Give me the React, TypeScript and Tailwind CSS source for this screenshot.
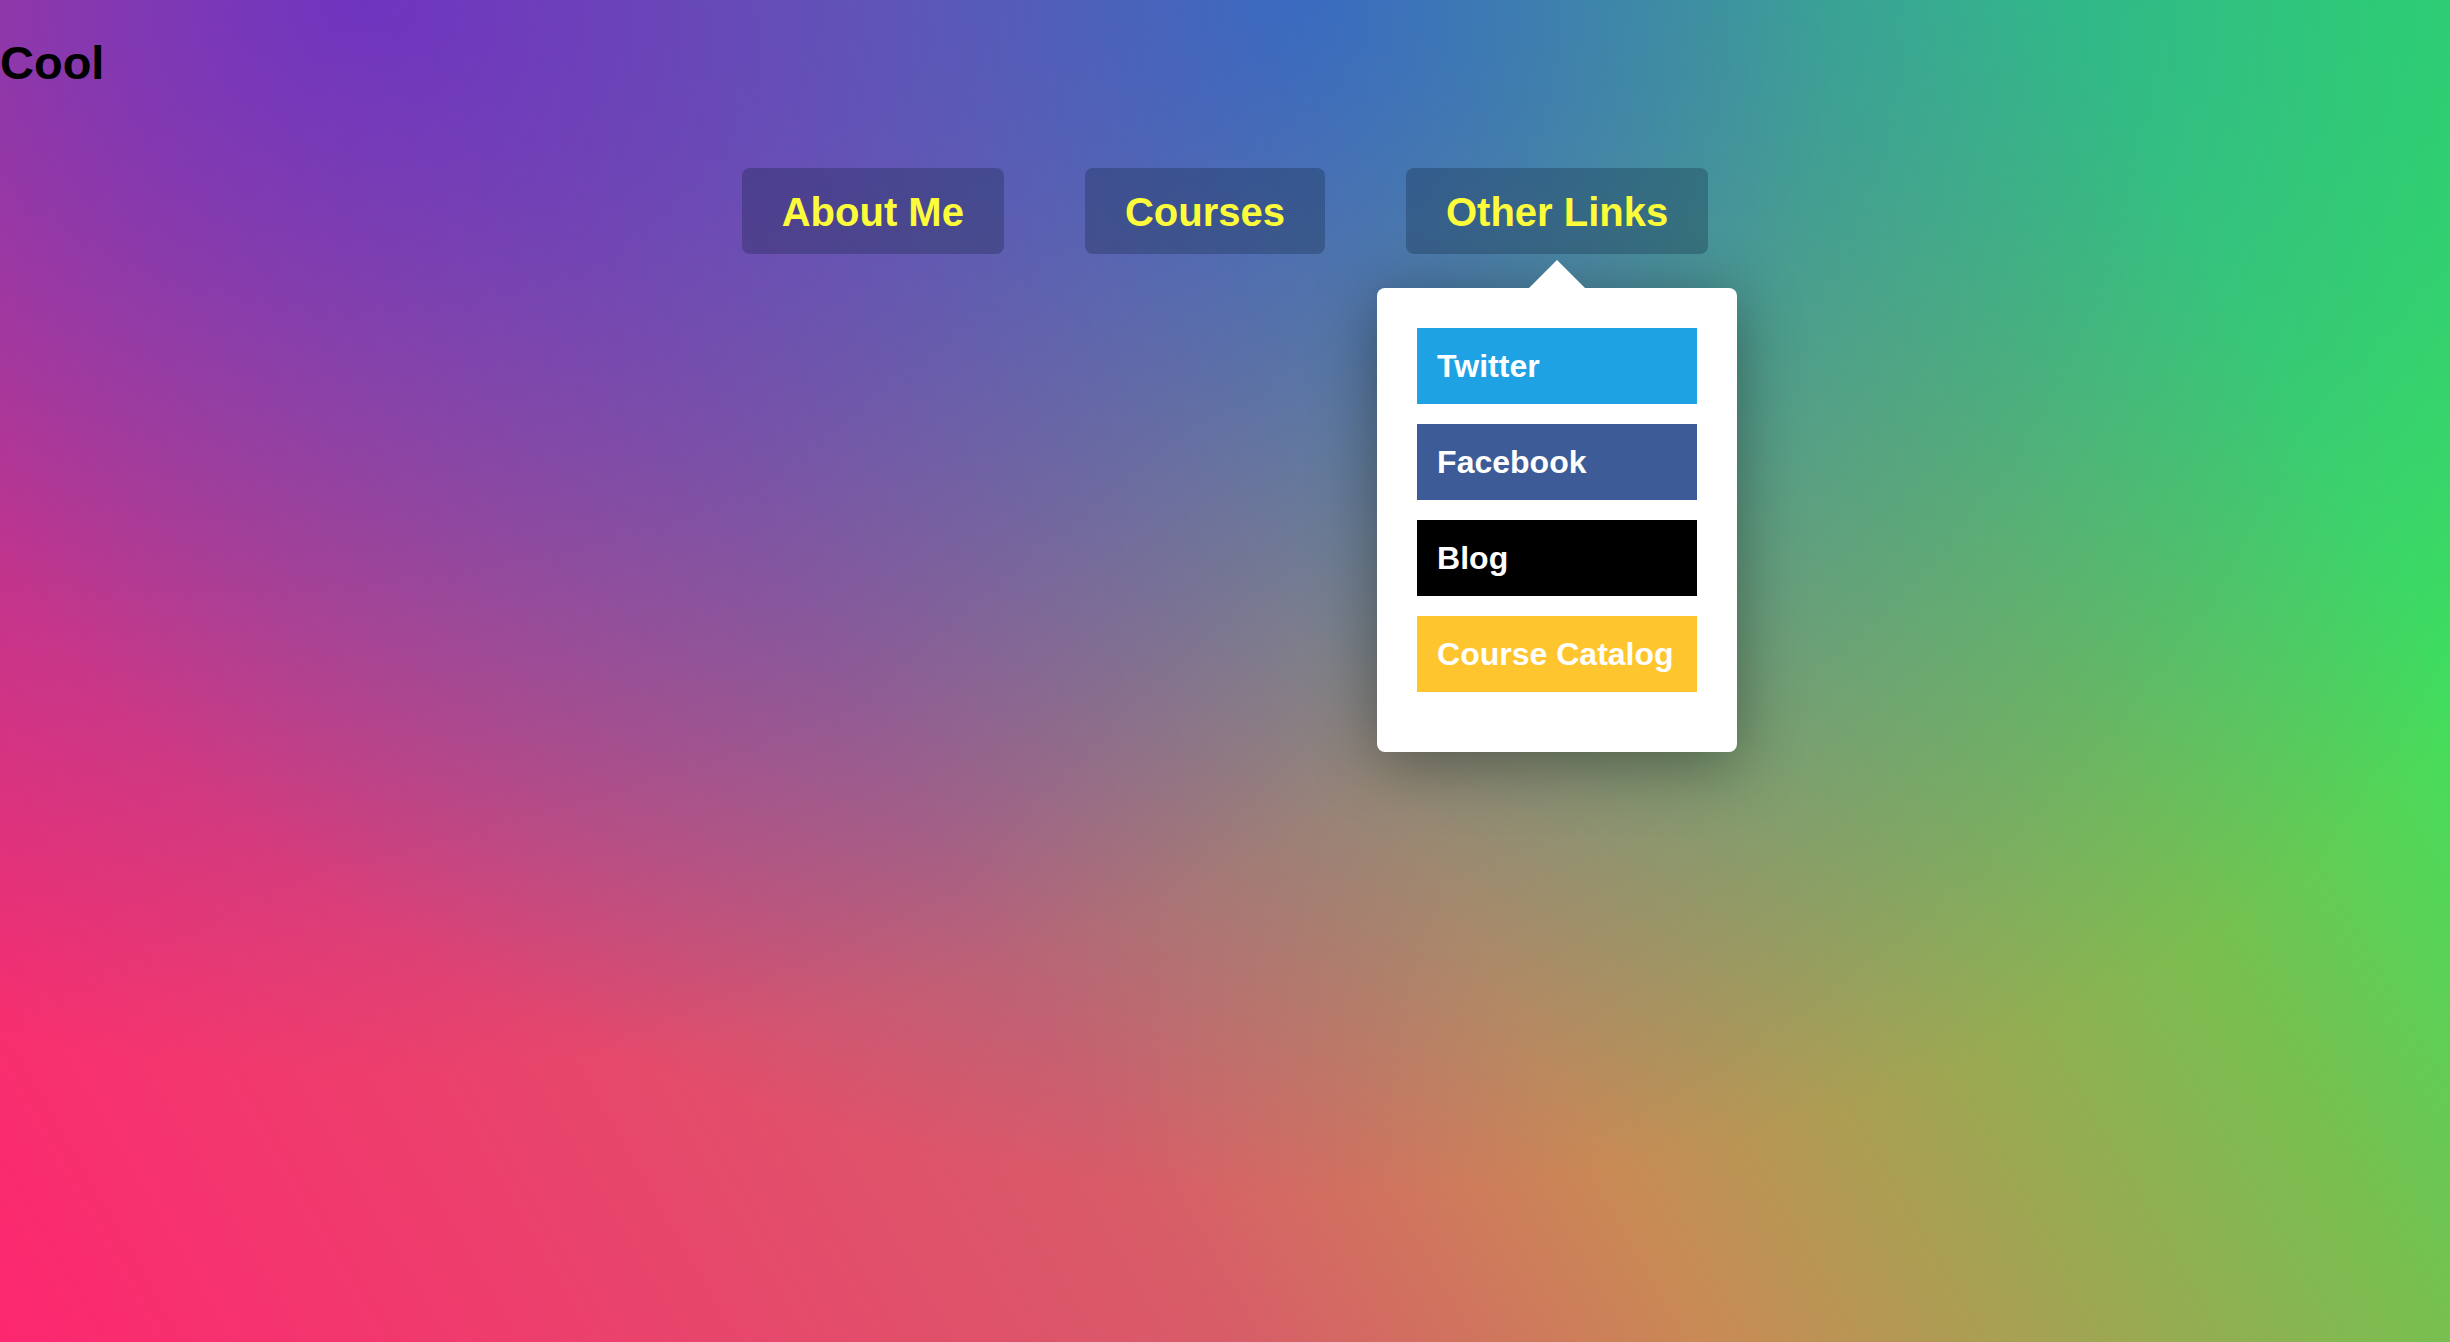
import { useState } from 'react';

// 메뉴 데이터
const navItems = [
  { label: 'About Me', href: '#about' },
  { label: 'Courses', href: '#courses' },
  { label: 'Other Links', href: '#links', hasDropdown: true },
];

const otherLinks = [
  { label: 'Twitter', href: '#twitter', color: 'bg-[#1ea2e4]' },
  { label: 'Facebook', href: '#facebook', color: 'bg-[#3d5b96]' },
  { label: 'Blog', href: '#blog', color: 'bg-black' },
  { label: 'Course Catalog', href: '#catalog', color: 'bg-[#fec52e]' },
];

// 드롭다운 패널
const Dropdown = () => (
  <div className="absolute top-full left-1/2 -translate-x-1/2 mt-[6px] flex flex-col items-center z-10">
    {/* 화살표 (패널 그림자 위로) */}
    <div className="relative z-10 w-0 h-0 border-x-[28px] border-x-transparent border-b-[28px] border-b-white" />
    <div className="w-[360px] bg-white rounded-lg pt-10 pb-[60px] px-10 flex flex-col gap-5 shadow-[0_12px_64px_rgba(0,0,0,0.38)]">
      {otherLinks.map((link) => (
        <a
          key={link.label}
          href={link.href}
          className={`${link.color} h-[76px] flex items-center pl-5 text-white font-bold text-[32px] leading-none no-underline`}
        >
          {link.label}
        </a>
      ))}
    </div>
  </div>
);

export default function App() {
  const [openMenu] = useState('Other Links');

  return (
    <div
      className="min-h-screen w-full font-['Liberation_Sans',Arial,sans-serif] bg-[radial-gradient(60%_80%_at_15%_0%,rgba(100,40,205,0.8),rgba(100,40,205,0)),radial-gradient(60%_89%_at_53%_0%,rgba(30,132,195,0.92),rgba(30,132,195,0)),linear-gradient(60deg,#fd2770_0%,#d85c68_38%,#c98a55_53%,#78c050_76%,#40e05c_88%,#30e060_100%)]"
    >
      <h1 className="m-0 pt-[34px] text-[47px] leading-[58px] font-bold text-black">Cool</h1>

      <nav className="mt-[76px] flex justify-center gap-[81px]">
        {navItems.map((item) => (
          <div key={item.label} className="relative">
            <a
              href={item.href}
              className="h-[86px] px-10 pt-[2px] flex items-center rounded-lg bg-[rgba(10,30,50,0.28)] text-[#fdfc3b] font-bold text-[40px] leading-none no-underline"
            >
              {item.label}
            </a>
            {item.hasDropdown && openMenu === item.label && <Dropdown />}
          </div>
        ))}
      </nav>
    </div>
  );
}
